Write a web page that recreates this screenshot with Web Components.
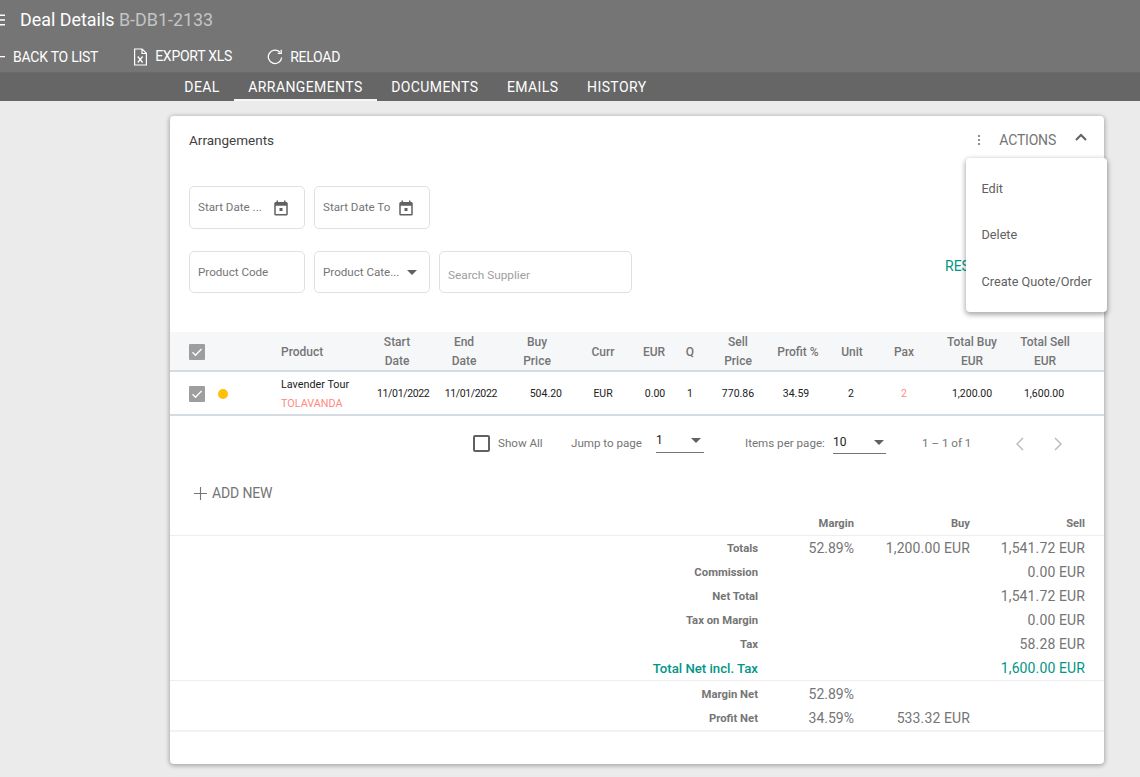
<!DOCTYPE html>
<html><head><meta charset="utf-8"><title>Deal Details</title>
<style>
html,body{margin:0;height:777px;overflow:hidden;background:#ebebeb;font-family:Roboto,"Liberation Sans",sans-serif}
</style></head><body>
<deal-header></deal-header>
<deal-tabs></deal-tabs>
<deal-card></deal-card>
<script>
const def=(n,html)=>customElements.define(n,class extends HTMLElement{connectedCallback(){if(this.shadowRoot)return;const s=this.attachShadow({mode:'open'});s.innerHTML=typeof html==='function'?html(this):html;}});
const CAL=`<svg width="18" height="18" viewBox="0 0 24 24" fill="#616161"><path d="M19 4h-1V2h-2v2H8V2H6v2H5a2 2 0 0 0-2 2v14a2 2 0 0 0 2 2h14a2 2 0 0 0 2-2V6a2 2 0 0 0-2-2zm0 16H5V9h14v11z"/><rect x="10" y="12" width="4" height="4"/></svg>`;
const CARET=`<svg width="10" height="5" viewBox="0 0 10 5" fill="#616161"><path d="M0 0h10L5 5z"/></svg>`;
const CHECK=`<svg width="16" height="16" viewBox="0 0 16 16"><rect width="16" height="16" rx="1" fill="#9e9e9e"/><path d="M3.5 8.3l3 3 6-6.300" fill="none" stroke="#fff" stroke-width="1.300"/></svg>`;

def('deal-header',`<style>
:host{display:block;background:#757575;height:72px;color:#fff;overflow:hidden}
.t{display:flex;align-items:center;height:39px;gap:15px;font-size:17.900px;font-weight:400}
.t svg{margin-left:-9px;flex:none}.t span span{color:#c4c4c4;font-weight:400}
.b{display:flex;align-items:center;height:36px;font-size:14px}
.a{display:flex;align-items:center;letter-spacing:-.25px;white-space:nowrap}
</style>
<div class="t"><svg width="14" height="12" viewBox="0 0 14 12" fill="#fff"><rect y="0.500" width="14" height="1.500"/><rect y="5.200" width="14" height="1.500"/><rect y="10" width="14" height="1.500"/></svg><span>Deal Details <span>B-DB1-2133</span></span></div>
<div class="b">
<div class="a" style="margin-left:-8px;gap:8px"><svg width="13" height="2" viewBox="0 0 13 2"><rect width="13" height="1.300" fill="#fff"/></svg>BACK TO LIST</div>
<div class="a" style="margin-left:35px;gap:7px"><svg width="15" height="18" viewBox="0 0 15 18" fill="none" stroke="#fff" stroke-width="1.200"><path d="M1.600 1h7.500l4.300 4.300V17H1.600z"/><path d="M9 1v4.500h4.400"/><path d="M4.800 8.500l4.800 6M9.600 8.500l-4.800 6" stroke-width="1.300"/></svg><span style="margin-bottom:2px">EXPORT XLS</span></div>
<div class="a" style="margin-left:35px;gap:7px"><svg width="16" height="16" viewBox="0 0 16 16" fill="none" stroke="#fff" stroke-width="1.300"><path d="M13 3.300A6.700 6.700 0 1 0 14.700 8.500"/><path d="M14.200 .8v3.500h-3.500"/></svg>RELOAD</div>
</div>`);

def('deal-tabs',`<style>
:host{display:block;background:#666;height:28px;border-top:1px solid #6b6b6b;font-size:14px;color:#fff;padding-left:170px}
.w{display:flex;height:28px}
.x{padding:0 14.300px;line-height:29px;font-weight:400;letter-spacing:.4px;white-space:nowrap;box-sizing:border-box}
.on{border-bottom:2px solid #f5f5f5}
</style><div class="w"><div class="x">DEAL</div><div class="x on">ARRANGEMENTS</div><div class="x">DOCUMENTS</div><div class="x">EMAILS</div><div class="x">HISTORY</div></div>`);

def('filter-field',h=>`<style>
:host{display:flex;align-items:center;justify-content:space-between;box-sizing:border-box;height:100%;border:1px solid #e0e0e0;border-radius:5px;padding:0 ${h.getAttribute('pr')||8}px 0 8px;font-size:11.600px;color:#757575;width:${h.getAttribute('w')}px;flex:none;white-space:nowrap}
span{padding-bottom:1px}
span.mut{color:#9e9e9e;padding:5px 0 0;font-size:11.800px}
</style><span class="${h.hasAttribute('mut')?'mut':''}"><slot></slot></span>${h.getAttribute('icon')==='cal'?CAL:h.getAttribute('icon')==='caret'?CARET:''}`);

def('actions-menu',`<style>
:host{display:block;position:absolute;left:796px;top:42px;width:141px;height:154px;background:#fff;border-radius:4px;box-shadow:0 2px 5px 1px rgba(0,0,0,.32);font-size:12.700px;color:#616161;padding:7.500px 0;box-sizing:border-box}
div{height:46.500px;line-height:46.500px;padding-left:15.500px;white-space:nowrap}
</style><div>Edit</div><div>Delete</div><div>Create Quote/Order</div>`);

const hCols='111px 87px 58px 76px 70px 62px 40px 32px 64px 56px 52px 52px 84px 62px 28px';
const dCols='111px 96px 52px 68px 65px 82px 22px 48px 48px 68px 42px 64px 72px 72px 24px';
def('deal-table',`<style>
:host{display:block;font-size:12px}
.h,.r{display:grid;align-items:center;text-align:center;box-sizing:border-box}
.h{grid-template-columns:${hCols};height:40px;padding-top:1px;background:#f5f7f9;border-bottom:2px solid #d5dce1;color:#757575;font-weight:500;line-height:19px}
.r{grid-template-columns:${dCols};height:44px;padding-top:1px;border-bottom:2px solid #d5dce1;font-size:10.500px;color:#212121}
.s{display:flex;align-items:center;padding-left:19px}
.l{text-align:left}.n{display:block;font-size:10.800px;color:#212121;line-height:19px}.c{color:#ff8a80;line-height:19px;display:block;font-size:10.800px}
.dot{width:10px;height:10px;border-radius:50%;background:#ffc107;margin-left:13px}
.rt{text-align:right}.d{letter-spacing:-.35px;white-space:nowrap}
</style>
<div class="h"><div class="s">${CHECK}</div><div class="l">Product</div><div>Start<br>Date</div><div>End<br>Date</div><div>Buy<br>Price</div><div>Curr</div><div>EUR</div><div>Q</div><div>Sell<br>Price</div><div>Profit %</div><div>Unit</div><div>Pax</div><div>Total Buy<br>EUR</div><div>Total Sell<br>EUR</div><div></div></div>
<div class="r"><div class="s">${CHECK}<span class="dot"></span></div><div class="l"><span class="n">Lavender Tour</span><span class="c">TOLAVANDA</span></div><div class="d">11/01/2022</div><div class="d rt">11/01/2022</div><div class="rt">504.20</div><div>EUR</div><div>0.00</div><div>1</div><div>770.86</div><div>34.59</div><div>2</div><div style="color:#ff8a80">2</div><div>1,200.00</div><div>1,600.00</div><div></div></div>`);

def('deal-pager',`<style>
:host{display:flex;align-items:center;height:54px;font-size:11.600px;color:#757575;padding-left:303px;white-space:nowrap}
.cb{width:13px;height:13px;border:2px solid #616161;border-radius:2px;flex:none;margin-right:8px}
.sel{display:flex;justify-content:space-between;align-items:center;color:#212121;border-bottom:1px solid #757575;box-sizing:border-box;flex:none;font-size:12px}
.sel svg{margin-right:3px}
</style>
<div class="cb"></div><span style="width:73px;padding-bottom:1px">Show All</span><span style="width:85px;padding-bottom:1px">Jump to page</span>
<div class="sel" style="width:48px;height:20px;padding-bottom:5px">1${CARET}</div>
<span style="margin-left:41px;width:88px;padding-bottom:1px">Items per page:</span>
<div class="sel" style="width:53px;height:20px;margin-top:2px;padding-bottom:3px">10<svg width="10" height="5" viewBox="0 0 10 5" fill="#616161" style="margin-right:2px"><path d="M0 0h10L5 5z"/></svg></div>
<span style="margin-left:36px;width:92px">1 – 1 of 1</span>
<svg width="12" height="14" viewBox="0 0 12 14" fill="none" stroke="#bdbdbd" stroke-width="1.500" style="margin-right:26px;margin-top:2px"><path d="M9 1L3 7l6 6"/></svg>
<svg width="12" height="14" viewBox="0 0 12 14" fill="none" stroke="#bdbdbd" stroke-width="1.500" style="margin-top:2px"><path d="M3 1l6 6-6 6"/></svg>`);

def('total-row',h=>{const a=k=>h.getAttribute(k)||'';const tl=h.hasAttribute('teal');return `<style>
:host{display:grid;grid-template-columns:588px 96px 116px 115px;align-items:center;height:24px;color:${tl?'#009688':'#757575'};font-size:14px;text-align:right;white-space:nowrap}
.l{font-size:${tl?'13.200px':'11.300px'};font-weight:${tl?'500':'700'};color:${tl?'#009688':'#757575'}}
.v{letter-spacing:.12px}
</style><div class="l">${a('label')}</div><div>${a('m')}</div><div class="v">${a('b')}</div><div class="v">${a('s')}</div>`});

def('deal-totals',`<style>
:host{display:block}
.hd{display:grid;grid-template-columns:684px 116px 115px;height:23px;align-items:center;text-align:right;font-size:11.200px;font-weight:700;color:#757575;border-bottom:1px solid #eee;box-sizing:content-box}
.g{border-bottom:1px solid #eee}
.g2{padding-top:1px;border-bottom:2px solid #f2f2f2}
</style><div class="hd"><div>Margin</div><div>Buy</div><div>Sell</div></div>
<div class="g"><slot name="a"></slot></div><div class="g2"><slot name="b"></slot></div>`);

def('deal-card',`<style>
:host{display:block;position:relative;margin:15px 0 0 170px;width:934px;height:648px;background:#fff;border-radius:4px;box-shadow:0 1px 4px 1px rgba(0,0,0,.28)}
.top{display:flex;align-items:center;height:48px;padding:0 19px;font-size:13.500px;color:#424242;box-sizing:border-box}
.top .sp{flex:1}.act{color:#757575;font-size:14px;letter-spacing:-.2px;margin:0 19px 0 18px}
.fr{display:flex;padding-left:19px}
.f1{height:43px;margin-top:22px;gap:9.500px}.f2{height:42px;margin-top:22px;gap:9.500px;align-items:stretch;position:relative}
.reset{position:absolute;left:775px;top:7px;color:#009688;font-size:14px}
.add{display:flex;align-items:center;gap:5px;height:24px;margin:11px 0 0 24px;font-size:14px;color:#757575;letter-spacing:-.15px}
deal-table{margin-top:39px}
deal-totals{margin-top:7px}
</style>
<div class="top">Arrangements<span class="sp"></span>
<svg width="4" height="12" viewBox="0 0 4 12" fill="#757575"><circle cx="2" cy="2" r="1.100"/><circle cx="2" cy="6" r="1.100"/><circle cx="2" cy="10" r="1.100"/></svg>
<span class="act">ACTIONS</span>
<svg width="12" height="8" viewBox="0 0 12 8" fill="none" stroke="#616161" stroke-width="2" style="margin:0 -2px 6px 0"><path d="M1 7l5-5 5 5"/></svg></div>
<div class="fr f1"><filter-field w="115.500" pr="14" icon="cal">Start Date ...</filter-field><filter-field w="115.500" pr="14" icon="cal">Start Date To</filter-field></div>
<div class="fr f2"><filter-field w="115.500">Product Code</filter-field><filter-field w="115.500" pr="12" icon="caret">Product Cate...</filter-field><filter-field w="193" mut>Search Supplier</filter-field><span class="reset">RESET</span></div>
<deal-table></deal-table>
<deal-pager></deal-pager>
<div class="add"><svg width="13" height="13" viewBox="0 0 13 13" stroke="#757575" stroke-width="1.100"><path d="M6.500 0v13M0 6.500h13"/></svg>ADD NEW</div>
<deal-totals>
<total-row slot="a" label="Totals" m="52.89%" b="1,200.00 EUR" s="1,541.72 EUR"></total-row>
<total-row slot="a" label="Commission" s="0.00 EUR"></total-row>
<total-row slot="a" label="Net Total" s="1,541.72 EUR"></total-row>
<total-row slot="a" label="Tax on Margin" s="0.00 EUR"></total-row>
<total-row slot="a" label="Tax" s="58.28 EUR"></total-row>
<total-row slot="a" teal label="Total Net incl. Tax" s="1,600.00 EUR"></total-row>
<total-row slot="b" label="Margin Net" m="52.89%"></total-row>
<total-row slot="b" label="Profit Net" m="34.59%" b="533.32 EUR"></total-row>
</deal-totals>
<actions-menu></actions-menu>`);
</script>
</body></html>
